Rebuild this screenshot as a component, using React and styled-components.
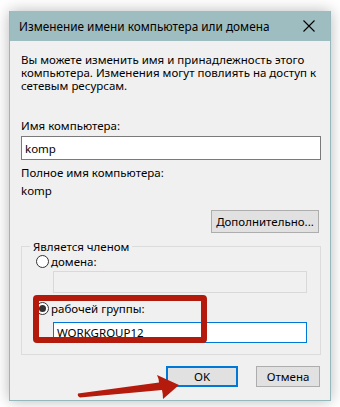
import React from "react"
import styled, { createGlobalStyle } from "styled-components"

const GlobalStyle = createGlobalStyle`
  html, body {
    margin: 0;
    padding: 0;
    background: #ffffff;
  }
  body {
    font-family: "Noto Sans", "Liberation Sans", sans-serif;
    font-size: 11.5px;
    color: #000000;
  }
`

const Page = styled.div`
  position: relative;
  width: 340px;
  height: 407px;
  padding: 11px 9px 0 9px;
  box-sizing: border-box;
  overflow: hidden;
`

const Dialog = styled.div`
  width: 322px;
  height: 390px;
  box-sizing: border-box;
  border: 1px solid #95b8bc;
  border-top: none;
  background: #f0f0f0;
  box-shadow: 0 0 14px rgba(0, 0, 0, 0.28);
  display: flex;
  flex-direction: column;
  overflow: hidden;
`

const TitleBar = styled.div`
  height: 30px;
  flex: none;
  background: #9ebdc1;
  display: flex;
  align-items: center;
  justify-content: space-between;
  padding: 0 15px 0 9px;
  font-size: 11.8px;
  line-height: 14px;
  white-space: nowrap;
`

const Body = styled.div`
  padding: 12px 10px 0 11px;
  display: flex;
  flex-direction: column;
`

const Text = styled.div`
  line-height: 13px;
  white-space: nowrap;
  margin-top: ${p => p.$mt || 0}px;
`

const TextInput = styled.div`
  box-sizing: border-box;
  height: ${p => p.$h || 24}px;
  margin-top: ${p => p.$mt || 0}px;
  margin-left: ${p => p.$ml || 0}px;
  width: ${p => p.$w}px;
  border: 1px solid ${p => p.$border || "#7a7a7a"};
  background: ${p => p.$bg || "#ffffff"};
  display: flex;
  align-items: center;
  padding-left: 3px;
`

const ButtonRow = styled.div`
  display: flex;
  justify-content: flex-end;
  gap: ${p => p.$gap || 0}px;
  margin-top: ${p => p.$mt || 0}px;
  padding-right: ${p => p.$pr || 0}px;
`

const Button = styled.div`
  box-sizing: border-box;
  width: ${p => p.$w}px;
  height: ${p => p.$h || 23}px;
  background: #e1e1e1;
  border: ${p => (p.$default ? "2px solid #0078d7" : "1px solid #adadad")};
  display: flex;
  align-items: center;
  justify-content: center;
  white-space: nowrap;
`

const Group = styled.fieldset`
  margin: 7px 0 0 0;
  padding: 0 14px 11px 14px;
  width: 300px;
  box-sizing: border-box;
  border: 1px solid #dcdcdc;
  min-inline-size: 0;
`

const Legend = styled.legend`
  padding: 0 3px;
  margin-left: -6px;
  line-height: 13px;
`

const RadioRow = styled.div`
  display: flex;
  align-items: center;
  height: 14px;
  margin-top: ${p => p.$mt || 0}px;
`

const Radio = styled.span`
  box-sizing: border-box;
  width: 13px;
  height: 13px;
  border-radius: 50%;
  border: 1px solid #333333;
  background: #ffffff;
  margin-right: 2px;
  display: flex;
  align-items: center;
  justify-content: center;

  &::after {
    content: "";
    width: 7px;
    height: 7px;
    border-radius: 50%;
    background: ${p => (p.$checked ? "#333333" : "transparent")};
  }
`

const RedFrame = styled.div`
  position: absolute;
  left: 33px;
  top: 295px;
  width: 174px;
  height: 48px;
  box-sizing: border-box;
  border: 6px solid #b31a0c;
  border-radius: 4px;
  pointer-events: none;
`

const Overlay = styled.svg`
  position: absolute;
  left: 0;
  top: 0;
  pointer-events: none;
`

const CloseIcon = () => (
  <svg width="12" height="12" viewBox="0 0 12 12">
    <path d="M0.5 0.5 L11.5 11.5 M11.5 0.5 L0.5 11.5" stroke="#000" strokeWidth="1.1" />
  </svg>
)

export default function App() {
  return (
    <Page>
      <GlobalStyle />
      <Dialog>
        <TitleBar>
          <span>Изменение имени компьютера или домена</span>
          <CloseIcon />
        </TitleBar>
        <Body>
          <Text>
            Вы можете изменить имя и принадлежность этого
            <br />
            компьютера. Изменения могут повлиять на доступ к
            <br />
            сетевым ресурсам.
          </Text>
          <Text $mt={27}>Имя компьютера:</Text>
          <TextInput $mt={4} $w={300}>komp</TextInput>
          <Text $mt={6}>Полное имя компьютера:</Text>
          <Text $mt={5}>komp</Text>
          <ButtonRow $mt={13} $pr={1}>
            <Button $w={108}>Дополнительно...</Button>
          </ButtonRow>
          <Group>
            <Legend>Является членом</Legend>
            <RadioRow $mt={1}>
              <Radio />
              домена:
            </RadioRow>
            <TextInput $mt={3} $ml={17} $w={254} $h={22} $border="#d9d9d9" $bg="#f0f0f0" />
            <RadioRow $mt={8}>
              <Radio $checked />
              рабочей группы:
            </RadioRow>
            <TextInput $mt={7} $ml={17} $w={254} $h={21} $border="#0078d7">
              WORKGROUP12
            </TextInput>
          </Group>
          <ButtonRow $mt={11} $gap={18}>
            <Button $default $w={72} $h={21}>OK</Button>
            <Button $w={64} $h={21}>Отмена</Button>
          </ButtonRow>
        </Body>
      </Dialog>
      <RedFrame />
      <Overlay width="340" height="407" viewBox="0 0 340 407">
        <path
          d="M78 393.5 L159 382.5 Q159 379 157 375 L179 385 L163 399 Q163 394 162 390 L80 397.5 Q77 396 78 393.5 Z"
          fill="#b51b0d"
        />
      </Overlay>
    </Page>
  )
}
